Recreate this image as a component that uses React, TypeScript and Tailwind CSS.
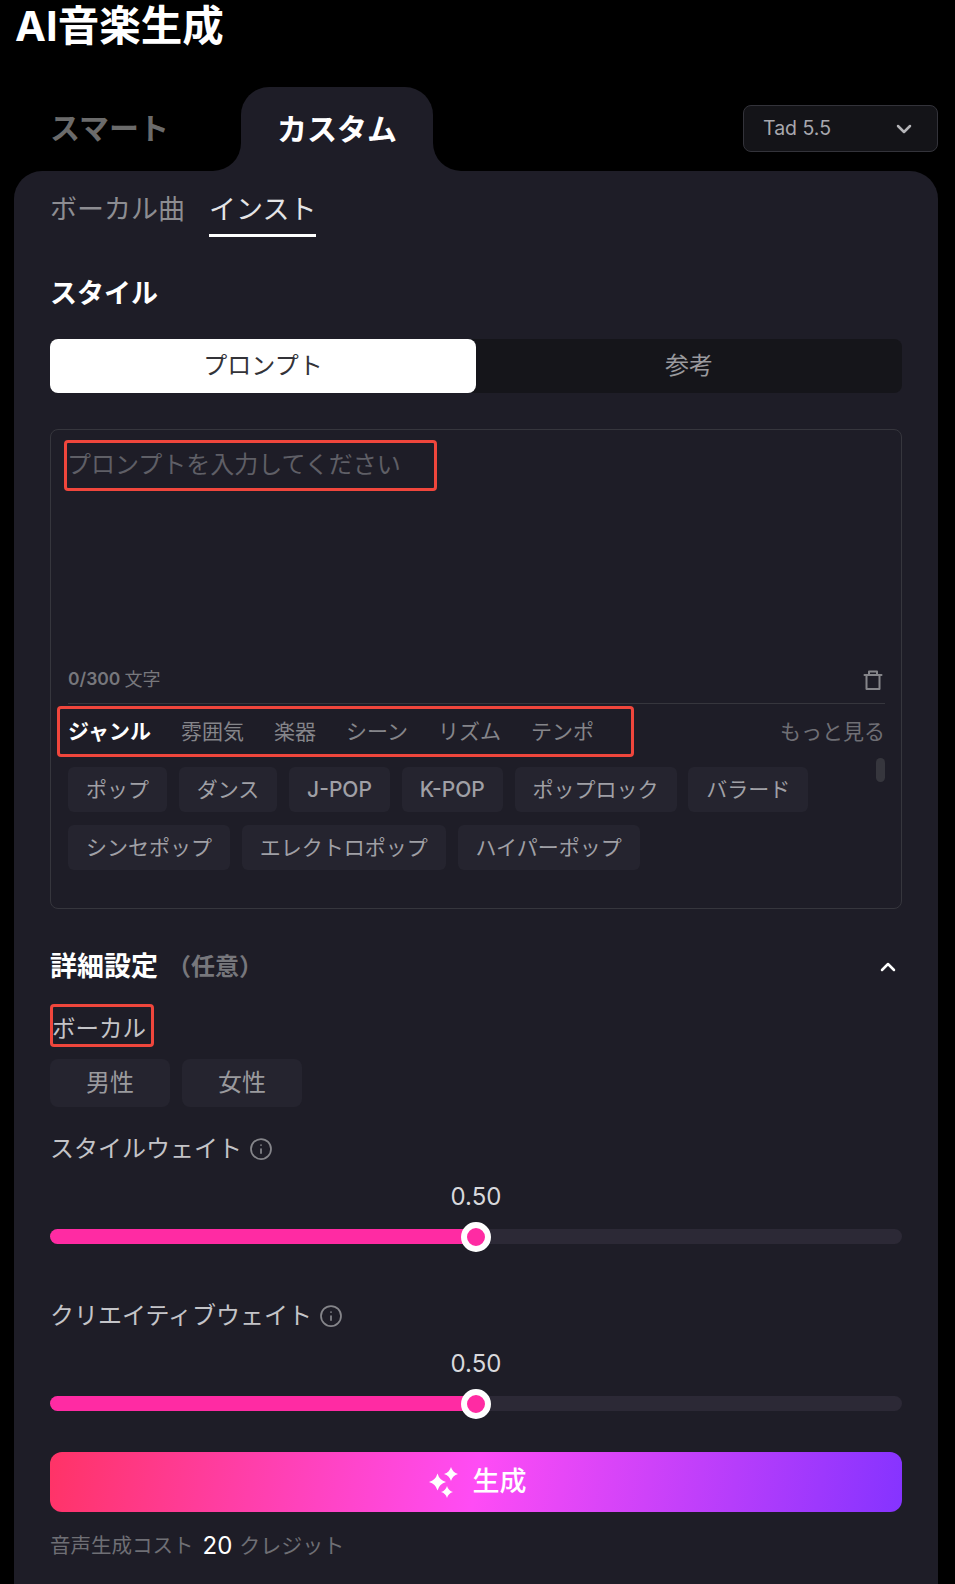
import React from 'react';
import { ChevronDown, ChevronUp, Info } from 'lucide-react';

const row1 = ['ポップ', 'ダンス', 'J-POP', 'K-POP', 'ポップロック', 'バラード'];
const row2 = ['シンセポップ', 'エレクトロポップ', 'ハイパーポップ'];
const categories = ['雰囲気', '楽器', 'シーン', 'リズム', 'テンポ'];

const Tag = ({ label }: { label: string }) => (
  <span className={`h-[45px] px-[18px] flex items-center rounded-md bg-[#25242f] text-[21px] text-[#a0a0a6] ${label.includes('POP') ? 'font-medium' : ''}`}>{label}</span>
);

const Trash = () => (
  <svg width="20" height="22" viewBox="0 0 20 22" fill="none" stroke="#85858a" strokeWidth="2" strokeLinejoin="round" strokeLinecap="round" className="mr-[2px]">
    <path d="M1.500 6h17" />
    <path d="M6 6V2.500h8V6" />
    <path d="M3.500 6v14h13V6" />
  </svg>
);

const star = (cx: number, cy: number, r: number) => {
  const c = r * 0.22;
  return `M${cx} ${cy - r}Q${cx + c} ${cy - c} ${cx + r} ${cy}Q${cx + c} ${cy + c} ${cx} ${cy + r}Q${cx - c} ${cy + c} ${cx - r} ${cy}Q${cx - c} ${cy - c} ${cx} ${cy - r}Z`;
};

const Sparkle = () => (
  <svg width="30" height="32" viewBox="0 0 30 32" fill="white">
    <path d={star(8.500, 16, 8.500)} />
    <path d={star(22, 8, 7)} />
    <path d={star(18, 26, 6)} />
  </svg>
);

const WeightSlider = ({ label }: { label: string }) => (
  <div>
    <div className="flex items-center gap-[7px] h-[34px] text-[24px] text-[#c4c4c8]">
      {label}
      <Info size={24} strokeWidth={1.75} className="text-[#85858a]" />
    </div>
    <div className="mt-[15px] text-center text-[24px] leading-[32px] text-[#d8d8dc]">0.50</div>
    <div className="relative mt-[16px] h-[15px] rounded-full bg-[#2c2936]">
      <div className="h-full w-1/2 rounded-full bg-[#ff2ba3]" />
      <div className="absolute left-1/2 top-1/2 -translate-x-1/2 -translate-y-1/2 w-[30px] h-[30px] rounded-full bg-[#ff2ba3] border-[6px] border-white" />
    </div>
  </div>
);

export default function App() {
  return (
    <div className="w-[955px] h-[1584px] bg-black overflow-hidden font-['Inter','Noto_Sans_CJK_JP',sans-serif]">
      <h1 className="pl-[15px] h-[87px] text-[41.500px] leading-[53px] font-bold text-white">AI音楽生成</h1>

      <div className="ml-[14px] mr-[17px] flex items-end h-[84px]">
        <div className="w-[227px] h-[78px] pl-[36px] pt-[13px] text-[30px] font-semibold text-[#6b6b6b]">スマート</div>
        <div className="relative w-[192px] h-[84px] rounded-t-[28px] bg-[#1e1d27] flex items-center justify-center text-[30px] font-semibold text-white">
          カスタム
          <div className="absolute bottom-0 -left-[28px] w-[28px] h-[28px] bg-[#1e1d27]">
            <div className="w-full h-full rounded-br-[28px] bg-black" />
          </div>
          <div className="absolute bottom-0 -right-[28px] w-[28px] h-[28px] bg-[#1e1d27]">
            <div className="w-full h-full rounded-bl-[28px] bg-black" />
          </div>
        </div>
        <div className="ml-auto mb-[19px] w-[195px] h-[47px] pl-[19px] pr-[21px] flex items-center justify-between rounded-lg border border-[#33333a] bg-[#141418] text-[19.500px] text-[#a8a8ae]">
          Tad 5.5
          <ChevronDown size={24} strokeWidth={2.500} className="text-[#b5b5b8]" />
        </div>
      </div>

      <div className="ml-[14px] mr-[17px] h-[1413px] rounded-t-[28px] bg-[#1e1d27] px-[36px]">
        <div className="flex gap-[24px] h-[66px] text-[27px]">
          <span className="h-[66px] flex items-center pt-[16px] border-b-[3px] border-transparent text-[#8d8d92]">ボーカル曲</span>
          <span className="h-[66px] flex items-center pt-[16px] text-[#e4e4e6] border-b-[3px] border-white">インスト</span>
        </div>

        <h2 className="mt-[37px] h-[38px] leading-[40px] text-[27px] font-bold text-white">スタイル</h2>

        <div className="mt-[27px] flex h-[54px] rounded-lg bg-[#15151a] text-[24px]">
          <div className="flex-1 flex items-center justify-center rounded-lg bg-white text-[#333338]">プロンプト</div>
          <div className="flex-1 flex items-center justify-center text-[#9a9a9e]">参考</div>
        </div>

        <div className="mt-[36px] h-[480px] rounded-lg border border-[#36363d] pl-[17px] pr-[16px] flex flex-col">
          <div className="mt-[10px] -ml-[4px] w-[373px] h-[51px] rounded-[4px] border-[3px] border-[#f0463c] flex items-center pb-[2px] text-[24px] text-[#5f5f66]">プロンプトを入力してください</div>
          <div className="mt-[169px] h-[44px] flex items-center justify-between border-b border-[#36363d] pb-[4px]">
            <span className="flex items-center gap-[4px] text-[18px] text-[#77777c]"><span className="text-[17.500px] font-semibold">0/300</span> 文字</span>
            <Trash />
          </div>
          <div className="flex items-start justify-between h-[63px] pt-[2px]">
            <div className="-ml-[11px] h-[51px] w-[577px] rounded-[4px] border-[3px] border-[#f0463c] flex items-center gap-[30px] pl-[8px] text-[21px] text-[#85858a]">
              <span className="font-bold text-white">ジャンル</span>
              {categories.map((c) => <span key={c}>{c}</span>)}
            </div>
            <span className="h-[51px] flex items-center text-[21px] text-[#6f6f75]">もっと見る</span>
          </div>
          <div className="relative flex flex-col gap-[13px]">
            <div className="flex gap-[11.750px]">{row1.map((t) => <Tag key={t} label={t} />)}</div>
            <div className="flex gap-[11.750px]">{row2.map((t) => <Tag key={t} label={t} />)}</div>
            <div className="absolute right-0 -top-[9px] w-[9px] h-[24px] rounded-full bg-[#36363d]" />
          </div>
        </div>

        <div className="mt-[38px] h-[40px] flex items-center justify-between pr-[2px]">
          <div className="flex items-center">
            <span className="text-[27px] font-bold text-white">詳細設定</span>
            <span className="ml-[9px] text-[24px] font-semibold text-[#77777c]">（任意）</span>
          </div>
          <ChevronUp size={24} strokeWidth={2.500} className="text-white" />
        </div>

        <div className="mt-[17px] w-[104px] h-[43px] rounded-[4px] border-[3px] border-[#f0463c] flex items-center pt-[7px] text-[23.500px] text-[#c4c4c8]">
          <span className="-ml-[1px]">ボーカル</span>
        </div>

        <div className="mt-[12px] flex gap-[12px]">
          <div className="w-[120px] h-[48px] flex items-center justify-center rounded-lg bg-[#25242f] text-[24px] text-[#9a9a9e]">男性</div>
          <div className="w-[120px] h-[48px] flex items-center justify-center rounded-lg bg-[#25242f] text-[24px] text-[#9a9a9e]">女性</div>
        </div>

        <div className="mt-[25px]"><WeightSlider label="スタイルウェイト" /></div>
        <div className="mt-[55px]"><WeightSlider label="クリエイティブウェイト" /></div>

        <button className="mt-[41px] w-full h-[60px] pl-[3px] flex items-center justify-center gap-[14px] rounded-xl bg-[linear-gradient(100deg,#ff3366_0%,#ff4cf5_50%,#8533ff_100%)] text-[27px] font-medium text-white">
          <Sparkle />
          生成
        </button>

        <div className="mt-[16px] flex items-center text-[20.500px] text-[#6f6f75]">
          <span>音声生成コスト</span>
          <span className="ml-[9px] text-[24px] text-white">20</span>
          <span className="ml-[7px] text-[21px]">クレジット</span>
        </div>
      </div>
    </div>
  );
}
